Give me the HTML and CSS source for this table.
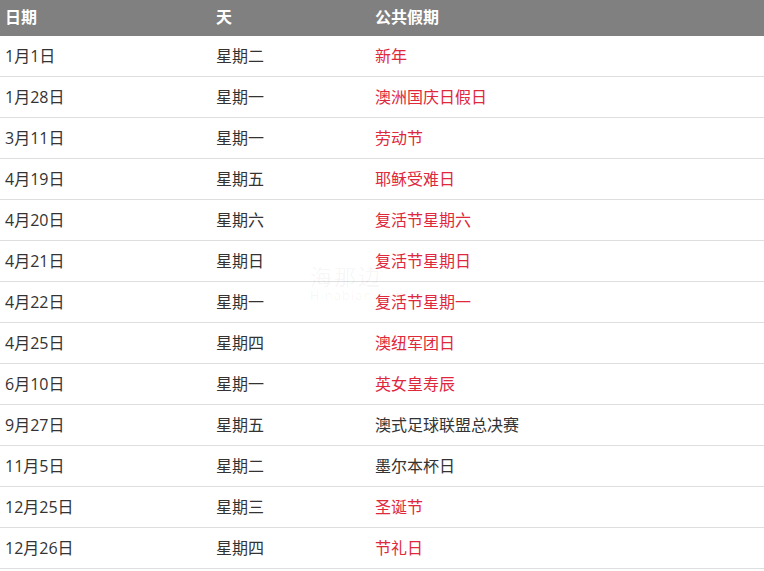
FILE: index.html
```html
<!DOCTYPE html>
<html lang="zh">
<head>
<meta charset="utf-8">
<link rel="stylesheet" href="styles.css">
</head>
<body>
<div class="wrap">
<table class="holidays">
<colgroup><col class="c1"><col class="c2"><col class="c3"></colgroup>
<thead>
<tr><th>日期</th><th>天</th><th>公共假期</th></tr>
</thead>
<tbody>
<tr><td>1月1日</td><td>星期二</td><td class="red">新年</td></tr>
<tr><td>1月28日</td><td>星期一</td><td class="red">澳洲国庆日假日</td></tr>
<tr><td>3月11日</td><td>星期一</td><td class="red">劳动节</td></tr>
<tr><td>4月19日</td><td>星期五</td><td class="red">耶稣受难日</td></tr>
<tr><td>4月20日</td><td>星期六</td><td class="red">复活节星期六</td></tr>
<tr><td>4月21日</td><td>星期日</td><td class="red">复活节星期日</td></tr>
<tr><td>4月22日</td><td>星期一</td><td class="red">复活节星期一</td></tr>
<tr><td>4月25日</td><td>星期四</td><td class="red">澳纽军团日</td></tr>
<tr><td>6月10日</td><td>星期一</td><td class="red">英女皇寿辰</td></tr>
<tr><td>9月27日</td><td>星期五</td><td>澳式足球联盟总决赛</td></tr>
<tr><td>11月5日</td><td>星期二</td><td>墨尔本杯日</td></tr>
<tr><td>12月25日</td><td>星期三</td><td class="red">圣诞节</td></tr>
<tr><td>12月26日</td><td>星期四</td><td class="red">节礼日</td></tr>
</tbody>
</table>
<div class="watermark"><div class="wm-cn">海那边</div><div class="wm-en">Hinabian.com</div></div>
</div>
</body>
</html>
```
FILE: styles.css
```css
html, body { margin: 0; padding: 0; background: #fff; }
body {
  font-family: "Open Sans", "Noto Sans CJK SC", sans-serif;
  font-size: 16px;
  color: #333;
}
.wrap { position: relative; width: 764px; }
.holidays {
  width: 764px;
  border-collapse: collapse;
  table-layout: fixed;
}
.c1 { width: 211px; }
.c2 { width: 159px; }
.holidays th {
  background: #808080;
  color: #fff;
  font-weight: bold;
  text-align: left;
  height: 36px;
  padding: 0 0 2px 5px;
  box-sizing: border-box;
  line-height: 20px;
  vertical-align: middle;
}
.holidays td {
  height: 40px;
  padding: 0 0 0 5px;
  border-bottom: 1px solid #dedede;
  vertical-align: middle;
  line-height: 20px;
}
.holidays td.red { color: #e0283c; }
.watermark {
  position: absolute;
  left: 310px;
  top: 264px;
  color: rgba(0,0,0,0.045);
  pointer-events: none;
}
.wm-cn { font-size: 22px; letter-spacing: 2px; line-height: 24px; }
.wm-en { font-size: 13px; line-height: 15px; letter-spacing: 1px; }
```
